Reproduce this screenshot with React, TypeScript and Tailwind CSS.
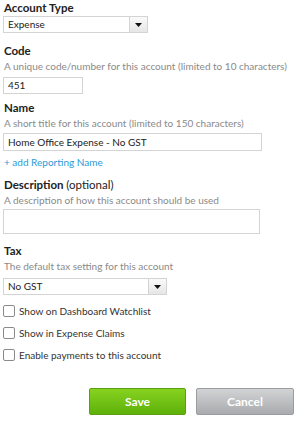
export default function App() {
  return (
    <div className="w-[296px] h-[421px] bg-white pl-[3px] font-['Lato','Liberation_Sans',sans-serif] text-[10px] text-[#333]">
      <Label>Account Type</Label>
      <Select value="Expense" width="w-[145px]" />

      <Label className="mt-[10px]">Code</Label>
      <Help>A unique code/number for this account (limited to 10 characters)</Help>
      <div className="mt-[3px] flex h-[17px] w-[80px] items-center border border-[#d4d4d4] pl-[4px] text-[#222]">451</div>

      <Label className="mt-[6px]">Name</Label>
      <Help>A short title for this account (limited to 150 characters)</Help>
      <div className="mt-[2px] flex h-[18px] w-[259px] items-center border border-[#d4d4d4] pl-[4px] text-[#222]">
        Home Office Expense - No GST
      </div>

      <div className="mt-[3px] h-[16px] pl-[1px] leading-[16px] text-[#2a9ad8]">+ add Reporting Name</div>

      <Label className="mt-[7px]">
        Description <span className="font-normal">(optional)</span>
      </Label>
      <Help>A description of how this account should be used</Help>
      <div className="mt-[1px] h-[25px] w-[257px] border border-[#d4d4d4]" />

      <Label className="mt-[9px]">Tax</Label>
      <Help>The default tax setting for this account</Help>
      <div className="mt-[4px]">
        <Select value="No GST" width="w-[164px]" />
      </div>

      <div className="mt-[5px] flex flex-col">
        <Check label="Show on Dashboard Watchlist" />
        <Check label="Show in Expense Claims" />
        <Check label="Enable payments to this account" />
      </div>

      <div className="mt-[22px] flex gap-[10px] pl-[86px]">
        <button className="h-[27px] w-[97px] rounded-[2px] border border-[#5b9e12] bg-gradient-to-b from-[#86d21f] to-[#5eb10a] text-[12px] font-bold text-white">
          Save
        </button>
        <button className="h-[27px] w-[98px] rounded-[2px] border border-[#9a9c9f] bg-gradient-to-b from-[#d2d3d5] to-[#a9abae] text-[12px] font-bold text-white">
          Cancel
        </button>
      </div>
    </div>
  );
}

function Label({ children, className = "" }: { children: React.ReactNode; className?: string }) {
  return <div className={`h-[16px] pl-[1px] text-[11.5px] font-bold leading-[16px] text-[#222] ${className}`}>{children}</div>;
}

function Help({ children }: { children: React.ReactNode }) {
  return <div className="h-[15px] pl-[1px] leading-[15px] whitespace-nowrap text-[#8a8a8a]">{children}</div>;
}

function Select({ value, width }: { value: string; width: string }) {
  return (
    <div className={`flex h-[17px] ${width} border border-[#d4d4d4]`}>
      <div className="flex flex-1 items-center pl-[4px] text-[#222]">{value}</div>
      <div className="flex w-[18px] items-center justify-center border-l border-[#d4d4d4] bg-gradient-to-b from-[#fafafa] to-[#e6e6e6]">
        <svg width="7" height="4" viewBox="0 0 7 4">
          <path d="M0 0h7L3.5 4z" fill="#111" />
        </svg>
      </div>
    </div>
  );
}

function Check({ label }: { label: string }) {
  return (
    <label className="flex h-[22px] items-center gap-[4px] text-[#333]">
      <span className="h-[12px] w-[12px] rounded-[2px] border border-[#8a8a8a] bg-white" />
      {label}
    </label>
  );
}
